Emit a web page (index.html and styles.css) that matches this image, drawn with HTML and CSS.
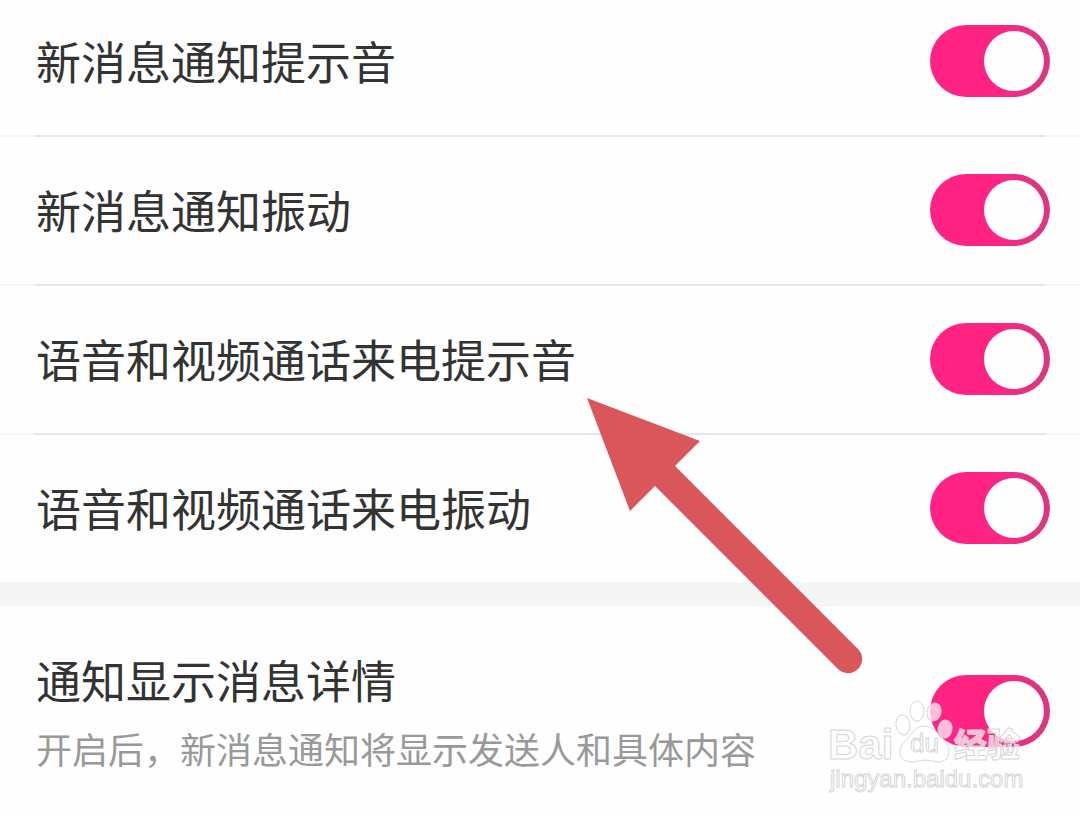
FILE: index.html
```html
<!DOCTYPE html>
<html lang="zh-CN">
<head>
<meta charset="utf-8">
<meta name="viewport" content="width=device-width, initial-scale=1">
<title>新消息通知</title>
<link rel="stylesheet" href="styles.css">
</head>
<body>
<main class="settings">
  <section class="group">
    <div class="row row-first">
      <label class="title" for="sound">新消息通知提示音</label>
      <input class="switch" type="checkbox" id="sound" checked>
    </div>
    <div class="row">
      <label class="title" for="vibrate">新消息通知振动</label>
      <input class="switch" type="checkbox" id="vibrate" checked>
    </div>
    <div class="row">
      <label class="title" for="call-sound">语音和视频通话来电提示音</label>
      <input class="switch" type="checkbox" id="call-sound" checked>
    </div>
    <div class="row">
      <label class="title" for="call-vibrate">语音和视频通话来电振动</label>
      <input class="switch" type="checkbox" id="call-vibrate" checked>
    </div>
  </section>
  <section class="group group-detail">
    <div class="row row-detail">
      <div class="texts">
        <label class="title" for="detail">通知显示消息详情</label>
        <p class="hint">开启后，新消息通知将显示发送人和具体内容</p>
      </div>
      <input class="switch" type="checkbox" id="detail" checked>
    </div>
  </section>

  <svg class="arrow" width="276" height="276" viewBox="0 0 276 276" aria-hidden="true">
    <path d="M0 0L113 43L88 68L271 251A14 14 0 0 1 251 271L68 88L43 113Z" fill="#d9565b"/>
  </svg>

  <svg class="watermark" width="204" height="104" viewBox="0 0 204 104" aria-hidden="true">
    <g class="mark">
      <text class="mark-bai" x="6" y="62">Bai</text>
      <ellipse cx="81" cy="28" rx="7" ry="10" transform="rotate(-8 81 28)"/>
      <ellipse cx="95" cy="14" rx="7" ry="10"/>
      <ellipse cx="112" cy="15" rx="7" ry="9" transform="rotate(14 112 15)"/>
      <ellipse cx="123" cy="32" rx="7" ry="9" transform="rotate(10 123 32)"/>
      <path d="M102 29C94 29 91 35 88 39C84 45 78 47 78 55C78 61 83 65 90 65C95 65 98 63 103 63C108 63 112 65 117 65C123 65 127 60 127 54C127 47 121 44 117 39C114 34 110 29 102 29Z"/>
      <text class="mark-du" x="88" y="55">du</text>
      <text class="mark-cn" x="132" y="60">经验</text>
      <text class="mark-url" x="8" y="90">jingyan.baidu.com</text>
    </g>
  </svg>
</main>
</body>
</html>
```
FILE: styles.css
```css
* {
  box-sizing: border-box;
}

body {
  margin: 0;
  background: #fefefe;
  font-family: "Noto Sans CJK SC", "Noto Sans", sans-serif;
}

.settings {
  position: relative;
  overflow: hidden;
}

.row {
  display: flex;
  align-items: center;
  justify-content: space-between;
  gap: 24px;
  padding: 37px 30px 38px 36px;
}

.row-first {
  padding-top: 25px;
}

.row + .row {
  border-top: 2px solid;
  border-image: linear-gradient(to right, #f6f6f6 36px, #e6e6e6 36px, #e6e6e6 calc(100% - 36px), #f6f6f6 calc(100% - 36px)) 2;
}

.group-detail {
  border-top: 24px solid #f5f5f5;
}

.row-detail {
  padding-top: 42px;
  align-items: flex-start;
}

.title {
  display: block;
  color: #333;
  font-size: 45px;
  line-height: 64px;
}

.hint {
  margin: 10px 0 0;
  color: #999;
  font-size: 36px;
  line-height: 52px;
}

.switch {
  appearance: none;
  flex: none;
  width: 120px;
  height: 72px;
  margin: 0;
  padding: 6px;
  border-radius: 36px;
  background: #ccc;
}

.switch::before {
  content: "";
  display: block;
  width: 60px;
  height: 60px;
  border-radius: 50%;
  background: #fefefe;
}

.switch:checked {
  background: linear-gradient(to right, #ff2484 55%, #dd3582 90%);
}

.switch:checked::before {
  margin-left: auto;
}

.row-detail .switch {
  margin-top: 27px;
}

.arrow {
  position: absolute;
  top: 398px;
  left: 587px;
  pointer-events: none;
}

.watermark {
  position: absolute;
  top: 697px;
  right: 54px;
  pointer-events: none;
}

.mark {
  fill: rgba(255, 255, 255, 0.7);
  stroke: #d6d6d6;
  stroke-width: 1;
  font-family: "Liberation Sans", "Noto Sans CJK SC", sans-serif;
}

.mark-bai {
  font-size: 42px;
  font-weight: 700;
}

.mark-du {
  font-size: 26px;
}

.mark-cn {
  font-family: "Noto Sans CJK SC", sans-serif;
  font-size: 33px;
  font-weight: 900;
}

.mark-url {
  font-size: 24px;
}
```
